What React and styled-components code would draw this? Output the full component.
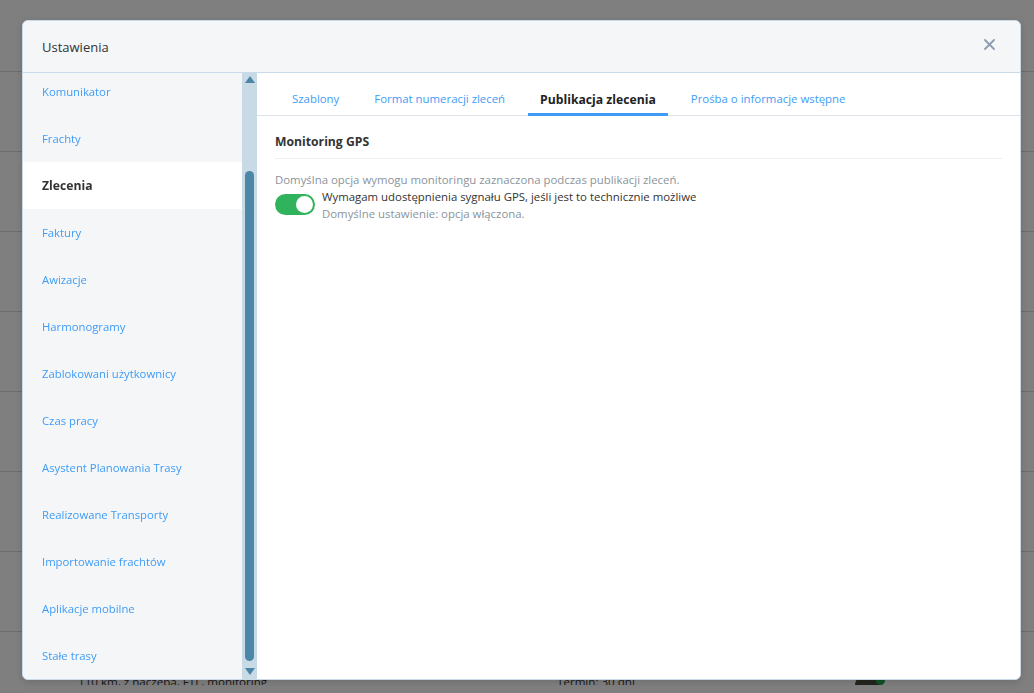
import React from "react";
import styled, { createGlobalStyle } from "styled-components";

const Global = createGlobalStyle`
  html, body { margin: 0; padding: 0; }
  body { font-family: "Open Sans", "Liberation Sans", sans-serif; background: #fff; color: #333; overflow: hidden; }
  * { box-sizing: border-box; }
`;

const Page = styled.div`
  width: 1034px;
  height: 693px;
  display: flex;
  flex-direction: column;
  margin-top: -8px;
`;

const BgRow = styled.div`
  height: 80px;
  flex: none;
  border-bottom: 1px solid #d8d8d8;
  display: flex;
  align-items: flex-end;
  padding: 0 0 22px 78px;
  font-size: 11.6px;
  color: #333;
`;

const BgCell = styled.span`
  width: ${(p) => p.$w}px;
  flex: none;
`;

const BgAvatar = styled.span`
  position: relative;
  width: 26px;
  height: 26px;
  border-radius: 50%;
  background: #444c3a;
  margin-bottom: -10px;
  &::after {
    content: "";
    position: absolute;
    right: -4px;
    top: 3px;
    width: 9px;
    height: 9px;
    border-radius: 50%;
    background: #1fa34a;
  }
`;

const Overlay = styled.div`
  position: fixed;
  inset: 0;
  background: rgba(0, 0, 0, 0.5);
`;

const Modal = styled.div`
  position: fixed;
  left: 22px;
  top: 20px;
  width: 999px;
  height: 660px;
  background: #fff;
  border: 1px solid #c9d9e8;
  border-radius: 6px;
  overflow: hidden;
  display: flex;
  flex-direction: column;
  box-shadow: 0 2px 8px rgba(0, 0, 0, 0.15);
`;

const Header = styled.div`
  height: 52px;
  flex: none;
  background: #f4f6f8;
  border-bottom: 1px solid #c9dbea;
  display: flex;
  align-items: center;
  justify-content: space-between;
  padding: 0 24px 0 19px;
`;

const Title = styled.h1`
  margin: 0;
  font-size: 13px;
  font-weight: 400;
  color: #333;
`;

const Close = styled.button`
  border: 0;
  background: none;
  padding: 0;
  width: 14px;
  height: 14px;
  display: flex;
  align-items: center;
  justify-content: center;
  margin-top: -4px;
  cursor: pointer;
`;

const Body = styled.div`
  flex: 1;
  display: flex;
  min-height: 0;
`;

const Sidebar = styled.nav`
  width: 219px;
  flex: none;
  background: #f4f6f8;
  overflow: hidden;
`;

const NavList = styled.ul`
  list-style: none;
  margin: -5px 0 0;
  padding: 0;
`;

const NavItem = styled.li`
  height: 47px;
  display: flex;
  align-items: center;
  padding-left: 19px;
  font-size: ${(p) => (p.$active ? "12.2px" : "11.3px")};
  background: ${(p) => (p.$active ? "#fff" : "transparent")};
  color: ${(p) => (p.$active ? "#333" : "#3f9cf6")};
  font-weight: ${(p) => (p.$active ? 700 : 400)};
`;

const Scrollbar = styled.div`
  width: 15px;
  flex: none;
  background: #c8dae6;
  display: flex;
  flex-direction: column;
  align-items: center;
  padding: 3px 0 4px;
`;

const Arrow = styled.span`
  width: 0;
  height: 0;
  border-left: 5px solid transparent;
  border-right: 5px solid transparent;
  ${(p) =>
    p.$down
      ? "border-top: 7px solid #4b86a8;"
      : "border-bottom: 7px solid #4b86a8;"}
  flex: none;
`;

const Track = styled.div`
  flex: 1;
  width: 100%;
  display: flex;
  flex-direction: column;
  align-items: center;
  padding: 88px 0 7px;
`;

const Thumb = styled.div`
  width: 9px;
  flex: 1;
  border-radius: 5px;
  background: #4c87a8;
`;

const Content = styled.section`
  flex: 1;
  display: flex;
  flex-direction: column;
  background: #fff;
`;

const Tabs = styled.div`
  height: 43px;
  flex: none;
  border-bottom: 1px solid #dde3e8;
  display: flex;
  align-items: flex-end;
  gap: 11px;
  padding-left: 23px;
`;

const Tab = styled.div`
  height: 30px;
  padding: 0 12px;
  display: flex;
  align-items: flex-start;
  padding-top: 5px;
  font-size: ${(p) => (p.$active ? "12.2px" : "11.4px")};
  white-space: nowrap;
  color: ${(p) => (p.$active ? "#222" : "#3f9cf6")};
  font-weight: ${(p) => (p.$active ? 700 : 400)};
  border-bottom: 3px solid ${(p) => (p.$active ? "#3f9cf6" : "transparent")};
  margin-bottom: -1px;
`;

const Panel = styled.div`
  padding: 17px 18px 0;
`;

const SectionTitle = styled.h2`
  margin: 0;
  font-size: 12.2px;
  font-weight: 700;
  color: #333;
  line-height: 17px;
  padding-bottom: 8px;
  border-bottom: 1px solid #eceff1;
`;

const Desc = styled.p`
  margin: 12px 0 0;
  font-size: 11.4px;
  line-height: 17px;
  color: #8a949b;
`;

const OptionRow = styled.div`
  display: flex;
  align-items: flex-start;
  gap: 7px;
`;

const Toggle = styled.span`
  width: 40px;
  height: 21px;
  border-radius: 11px;
  background: #30b35c;
  flex: none;
  display: flex;
  align-items: center;
  justify-content: flex-end;
  padding: 2px;
  margin-top: 6px;
  &::after {
    content: "";
    width: 17px;
    height: 17px;
    border-radius: 50%;
    background: #fff;
  }
`;

const OptionText = styled.div`
  display: flex;
  flex-direction: column;
  font-size: 11.4px;
  line-height: 17px;
`;

const OptionLabel = styled.span`
  color: #333;
`;

const OptionHint = styled.span`
  color: #8a949b;
`;

const navItems = [
  "Komunikator",
  "Frachty",
  "Zlecenia",
  "Faktury",
  "Awizacje",
  "Harmonogramy",
  "Zablokowani użytkownicy",
  "Czas pracy",
  "Asystent Planowania Trasy",
  "Realizowane Transporty",
  "Importowanie frachtów",
  "Aplikacje mobilne",
  "Stałe trasy",
];

const tabs = [
  "Szablony",
  "Format numeracji zleceń",
  "Publikacja zlecenia",
  "Prośba o informacje wstępne",
];

export default function App() {
  return (
    <>
      <Global />
      <Page>
        {Array.from({ length: 8 }).map((_, i) => (
          <BgRow key={i} />
        ))}
        <BgRow>
          <BgCell $w={479}>110 km, z naczepą, FTL, monitoring</BgCell>
          <BgCell $w={298}>Termin: 30 dni</BgCell>
          <BgAvatar />
        </BgRow>
      </Page>
      <Overlay />
      <Modal>
        <Header>
          <Title>Ustawienia</Title>
          <Close aria-label="Zamknij">
            <svg width="11" height="11" viewBox="0 0 11 11">
              <path d="M1 1L10 10M10 1L1 10" stroke="#8d9cae" strokeWidth="1.8" strokeLinecap="round" />
            </svg>
          </Close>
        </Header>
        <Body>
          <Sidebar>
            <NavList>
              {navItems.map((n) => (
                <NavItem key={n} $active={n === "Zlecenia"}>
                  {n}
                </NavItem>
              ))}
            </NavList>
          </Sidebar>
          <Scrollbar>
            <Arrow />
            <Track>
              <Thumb />
            </Track>
            <Arrow $down />
          </Scrollbar>
          <Content>
            <Tabs>
              {tabs.map((t) => (
                <Tab key={t} $active={t === "Publikacja zlecenia"}>
                  {t}
                </Tab>
              ))}
            </Tabs>
            <Panel>
              <SectionTitle>Monitoring GPS</SectionTitle>
              <Desc>Domyślna opcja wymogu monitoringu zaznaczona podczas publikacji zleceń.</Desc>
              <OptionRow>
                <Toggle />
                <OptionText>
                  <OptionLabel>Wymagam udostępnienia sygnału GPS, jeśli jest to technicznie możliwe</OptionLabel>
                  <OptionHint>Domyślne ustawienie: opcja włączona.</OptionHint>
                </OptionText>
              </OptionRow>
            </Panel>
          </Content>
        </Body>
      </Modal>
    </>
  );
}
